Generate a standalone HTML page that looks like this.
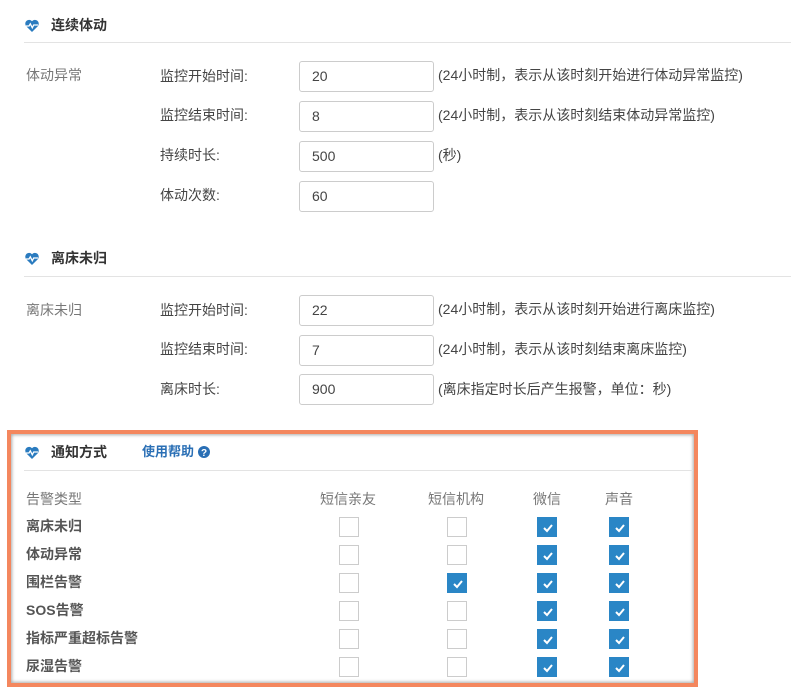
<!DOCTYPE html>
<html><head><meta charset="utf-8"><style>
*{margin:0;padding:0;box-sizing:border-box}
body{width:791px;height:692px;background:#fff;position:relative;overflow:hidden;font-family:"Liberation Sans","Noto Sans CJK SC",sans-serif;font-size:14px;color:#444}
.a{position:absolute;white-space:nowrap;line-height:16px}
.h{font-weight:bold;color:#333}
.line{position:absolute;height:1px;background:#e3e3e3;right:0}
.g{color:#777}
.in{position:absolute;left:299px;width:135px;height:31px;border:1px solid #ccc;border-radius:3px;padding-left:12px;line-height:29px;color:#444}
.cb{position:absolute;width:20px;height:20px;border:1px solid #ccc;background:#fff}
.cb.on{background:#2a86c6;border-color:#2a86c6}
.cb.on svg{position:absolute;left:4px;top:4px}
.row{font-weight:bold;color:#555}
.box{position:absolute;left:7px;top:430px;width:691px;height:257px;border:4px solid #f4875e;box-shadow:inset 0 0 3px 1px #aaa}
</style></head><body>
<svg style="position:absolute;left:25px;top:19px" width="14" height="13" viewBox="0 0 14 13"><path d="M7 13L1.2 7.2A3.6 3.6 0 0 1 7 2.2 3.6 3.6 0 0 1 12.8 7.2Z" fill="#2a7bbf"/><path d="M1 7h3l1.3-2.2 2 4 1.4-2.8H13" stroke="#fff" stroke-width="1.3" fill="none"/></svg>
<div class="a h" style="left:51px;top:17px">连续体动</div>
<div class="line" style="left:24px;top:42px"></div>
<div class="a g" style="left:26px;top:67px">体动异常</div>
<div class="a" style="left:160px;top:68px">监控开始时间:</div>
<div class="in" style="top:61px">20</div>
<div class="a" style="left:438px;top:67px">(24小时制，表示从该时刻开始进行体动异常监控)</div>
<div class="a" style="left:160px;top:107px">监控结束时间:</div>
<div class="in" style="top:101px">8</div>
<div class="a" style="left:438px;top:107px">(24小时制，表示从该时刻结束体动异常监控)</div>
<div class="a" style="left:160px;top:147px">持续时长:</div>
<div class="in" style="top:141px">500</div>
<div class="a" style="left:438px;top:147px">(秒)</div>
<div class="a" style="left:160px;top:187px">体动次数:</div>
<div class="in" style="top:181px">60</div>

<svg style="position:absolute;left:25px;top:252px" width="14" height="13" viewBox="0 0 14 13"><path d="M7 13L1.2 7.2A3.6 3.6 0 0 1 7 2.2 3.6 3.6 0 0 1 12.8 7.2Z" fill="#2a7bbf"/><path d="M1 7h3l1.3-2.2 2 4 1.4-2.8H13" stroke="#fff" stroke-width="1.3" fill="none"/></svg>
<div class="a h" style="left:51px;top:250px">离床未归</div>
<div class="line" style="left:24px;top:276px"></div>
<div class="a g" style="left:26px;top:302px">离床未归</div>
<div class="a" style="left:160px;top:302px">监控开始时间:</div>
<div class="in" style="top:295px">22</div>
<div class="a" style="left:438px;top:301px">(24小时制，表示从该时刻开始进行离床监控)</div>
<div class="a" style="left:160px;top:341px">监控结束时间:</div>
<div class="in" style="top:335px">7</div>
<div class="a" style="left:438px;top:341px">(24小时制，表示从该时刻结束离床监控)</div>
<div class="a" style="left:160px;top:381px">离床时长:</div>
<div class="in" style="top:374px">900</div>
<div class="a" style="left:438px;top:381px">(离床指定时长后产生报警，单位：秒)</div>

<div class="box"></div>
<svg style="position:absolute;left:25px;top:446px" width="14" height="13" viewBox="0 0 14 13"><path d="M7 13L1.2 7.2A3.6 3.6 0 0 1 7 2.2 3.6 3.6 0 0 1 12.8 7.2Z" fill="#2a7bbf"/><path d="M1 7h3l1.3-2.2 2 4 1.4-2.8H13" stroke="#fff" stroke-width="1.3" fill="none"/></svg>
<div class="a h" style="left:51px;top:444px">通知方式</div>
<div class="a" style="left:142px;top:444px;color:#2a6fb5;font-weight:bold;font-size:13px">使用帮助</div>
<svg style="position:absolute;left:198px;top:446px" width="12" height="12" viewBox="0 0 12 12"><circle cx="6" cy="6" r="6" fill="#2a6fb5"/><text x="6" y="10" font-size="10" font-weight="bold" fill="#fff" text-anchor="middle" font-family="Liberation Sans">?</text></svg>
<div class="line" style="left:24px;top:470px;right:98px"></div>
<div class="a g" style="left:26px;top:491px">告警类型</div>
<div class="a g" style="left:320px;top:491px">短信亲友</div>
<div class="a g" style="left:428px;top:491px">短信机构</div>
<div class="a g" style="left:533px;top:491px">微信</div>
<div class="a g" style="left:605px;top:491px">声音</div>

<div class="a row" style="left:26px;top:518px">离床未归</div>
<div class="a row" style="left:26px;top:546px">体动异常</div>
<div class="a row" style="left:26px;top:574px">围栏告警</div>
<div class="a row" style="left:26px;top:602px">SOS告警</div>
<div class="a row" style="left:26px;top:630px">指标严重超标告警</div>
<div class="a row" style="left:26px;top:658px">尿湿告警</div>

<div class="cb" style="left:339px;top:517px"></div><div class="cb" style="left:447px;top:517px"></div>
<div class="cb" style="left:339px;top:545px"></div><div class="cb" style="left:447px;top:545px"></div>
<div class="cb" style="left:339px;top:573px"></div><div class="cb on" style="left:447px;top:573px"><svg width="12" height="12" viewBox="0 0 12 12"><path d="M2 6l3 3 5-6" stroke="#fff" stroke-width="2" fill="none"/></svg></div>
<div class="cb" style="left:339px;top:601px"></div><div class="cb" style="left:447px;top:601px"></div>
<div class="cb" style="left:339px;top:629px"></div><div class="cb" style="left:447px;top:629px"></div>
<div class="cb" style="left:339px;top:657px"></div><div class="cb" style="left:447px;top:657px"></div>

<div class="cb on" style="left:537px;top:517px"><svg width="12" height="12" viewBox="0 0 12 12"><path d="M2 6l3 3 5-6" stroke="#fff" stroke-width="2" fill="none"/></svg></div>
<div class="cb on" style="left:609px;top:517px"><svg width="12" height="12" viewBox="0 0 12 12"><path d="M2 6l3 3 5-6" stroke="#fff" stroke-width="2" fill="none"/></svg></div>
<div class="cb on" style="left:537px;top:545px"><svg width="12" height="12" viewBox="0 0 12 12"><path d="M2 6l3 3 5-6" stroke="#fff" stroke-width="2" fill="none"/></svg></div>
<div class="cb on" style="left:609px;top:545px"><svg width="12" height="12" viewBox="0 0 12 12"><path d="M2 6l3 3 5-6" stroke="#fff" stroke-width="2" fill="none"/></svg></div>
<div class="cb on" style="left:537px;top:573px"><svg width="12" height="12" viewBox="0 0 12 12"><path d="M2 6l3 3 5-6" stroke="#fff" stroke-width="2" fill="none"/></svg></div>
<div class="cb on" style="left:609px;top:573px"><svg width="12" height="12" viewBox="0 0 12 12"><path d="M2 6l3 3 5-6" stroke="#fff" stroke-width="2" fill="none"/></svg></div>
<div class="cb on" style="left:537px;top:601px"><svg width="12" height="12" viewBox="0 0 12 12"><path d="M2 6l3 3 5-6" stroke="#fff" stroke-width="2" fill="none"/></svg></div>
<div class="cb on" style="left:609px;top:601px"><svg width="12" height="12" viewBox="0 0 12 12"><path d="M2 6l3 3 5-6" stroke="#fff" stroke-width="2" fill="none"/></svg></div>
<div class="cb on" style="left:537px;top:629px"><svg width="12" height="12" viewBox="0 0 12 12"><path d="M2 6l3 3 5-6" stroke="#fff" stroke-width="2" fill="none"/></svg></div>
<div class="cb on" style="left:609px;top:629px"><svg width="12" height="12" viewBox="0 0 12 12"><path d="M2 6l3 3 5-6" stroke="#fff" stroke-width="2" fill="none"/></svg></div>
<div class="cb on" style="left:537px;top:657px"><svg width="12" height="12" viewBox="0 0 12 12"><path d="M2 6l3 3 5-6" stroke="#fff" stroke-width="2" fill="none"/></svg></div>
<div class="cb on" style="left:609px;top:657px"><svg width="12" height="12" viewBox="0 0 12 12"><path d="M2 6l3 3 5-6" stroke="#fff" stroke-width="2" fill="none"/></svg></div>
</body></html>
